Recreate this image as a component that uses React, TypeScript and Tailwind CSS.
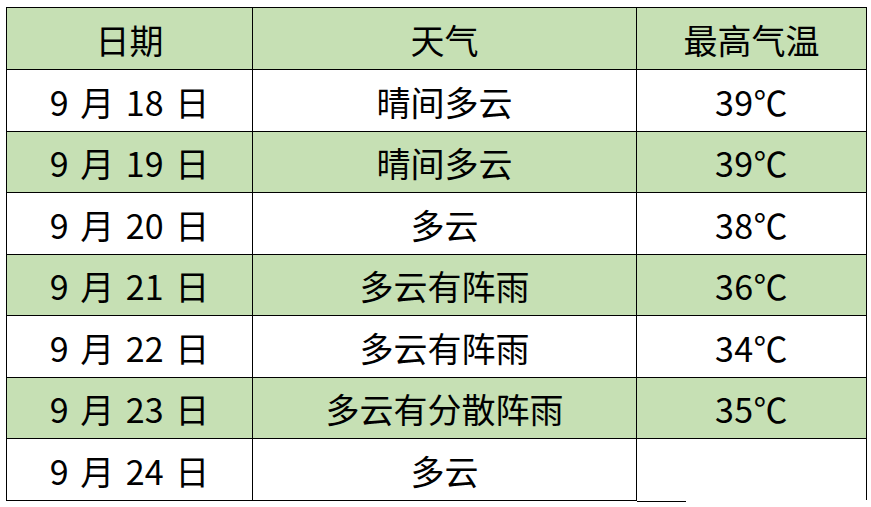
const rows: [string, string, string][] = [
  ['9 月 18 日', '晴间多云', '39℃'],
  ['9 月 19 日', '晴间多云', '39℃'],
  ['9 月 20 日', '多云', '38℃'],
  ['9 月 21 日', '多云有阵雨', '36℃'],
  ['9 月 22 日', '多云有阵雨', '34℃'],
  ['9 月 23 日', '多云有分散阵雨', '35℃'],
  ['9 月 24 日', '多云', ''],
];

export default function App() {
  return (
    <div
      className="w-[871px] h-[507px] bg-white pl-[6px] pt-[7px] text-black"
      style={{ fontFamily: '"Noto Sans CJK SC", "Noto Sans", sans-serif' }}
    >
      <table className="border-collapse table-fixed text-[34px] leading-none">
        <colgroup>
          <col className="w-[246px]" />
          <col className="w-[384px]" />
          <col className="w-[230px]" />
        </colgroup>
        <thead>
          <tr className="h-[62px] bg-[#c6e0b4]">
            <th className="border border-black font-normal text-center pt-[2px]">日期</th>
            <th className="border border-black font-normal text-center pt-[2px]">天气</th>
            <th className="border border-black font-normal text-center pt-[2px]">最高气温</th>
          </tr>
        </thead>
        <tbody>
          {rows.map((r, i) => {
            const last = i === rows.length - 1;
            return (
              <tr key={i} className={`h-[61.5px] ${i % 2 === 1 ? 'bg-[#c6e0b4]' : 'bg-white'}`}>
                <td className="border border-black text-center pt-[3px] [word-spacing:4px]">{r[0]}</td>
                <td className="border border-black text-center pt-[3px]">{r[1]}</td>
                <td
                  className={
                    last
                      ? 'relative border border-black border-b-0 text-center pt-[3px]'
                      : 'border border-black text-center pt-[3px] tracking-[0.5px]'
                  }
                >
                  {r[2]}
                  {last && (
                    <div className="absolute left-0 bottom-[-2px] w-[49px] h-px bg-black" />
                  )}
                </td>
              </tr>
            );
          })}
        </tbody>
      </table>
    </div>
  );
}
